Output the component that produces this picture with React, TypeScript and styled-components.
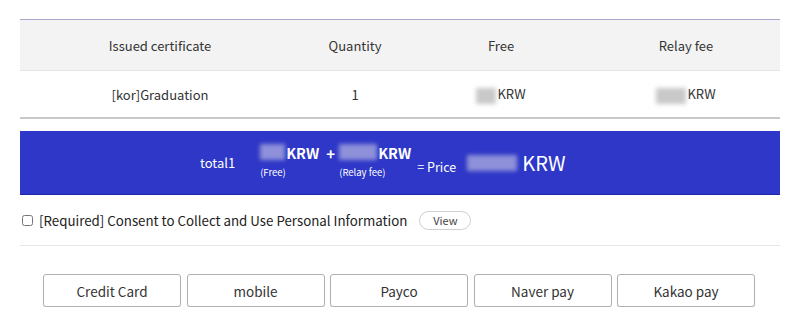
import React from 'react'
import styled, { createGlobalStyle } from 'styled-components'

const GlobalStyle = createGlobalStyle`
  html, body {
    margin: 0;
    padding: 0;
    background: #fff;
  }
  body {
    font-family: 'Noto Sans CJK KR', 'Noto Sans', sans-serif;
    color: #333;
  }
`

const Page = styled.div`
  width: 760px;
  padding: 19px 20px 0;
`

const Table = styled.table`
  width: 100%;
  border-collapse: collapse;
  border-top: 1px solid #a9a8cb;
  border-bottom: 2px solid #c9c9c9;
  font-size: 13px;
  color: #333;

  th {
    background: #f3f3f3;
    font-weight: 400;
    height: 50px;
    border-bottom: 1px solid #e6e6e6;
    padding: 0;
  }
  td {
    height: 46px;
    text-align: center;
    padding: 0;
  }
`

const Blur = styled.span<{ w: number; dark?: boolean }>`
  display: inline-block;
  width: ${p => p.w}px;
  height: 16px;
  vertical-align: middle;
  background: ${p => (p.dark ? '#8e90d9' : '#c9c9c9')};
  filter: blur(2px);
  margin-right: 1px;
`

const Summary = styled.div`
  margin-top: 12px;
  height: 63px;
  background: #2e37c7;
  border-bottom: 1px solid #1e26a8;
  display: flex;
  align-items: center;
  color: #fff;
  padding-left: 180px;
`

const TotalLabel = styled.span`
  font-size: 13px;
  margin-right: 25px;
`

const Amount = styled.div`
  display: flex;
  flex-direction: column;
  align-items: flex-start;
  margin-top: -4px;
`

const AmountValue = styled.span`
  font-size: 14.5px;
  font-weight: 700;
  display: flex;
  align-items: center;
  height: 20px;
`

const AmountNote = styled.span`
  font-size: 9.5px;
  margin-top: 3px;
`

const Plus = styled.span`
  font-size: 15px;
  font-weight: 700;
  margin: -18px 4px 0 7px;
`

const Equal = styled.span`
  font-size: 12.5px;
  margin: 8px 11px 0 6px;
`

const Price = styled.span`
  font-size: 20px;
  display: flex;
  align-items: center;
  gap: 4px;
`

const Consent = styled.div`
  display: flex;
  align-items: center;
  height: 50px;
  border-bottom: 1px solid #e6e6e6;
  font-size: 13.3px;
  color: #222;
  padding-left: 2px;
`

const Check = styled.input`
  width: 11px;
  height: 11px;
  margin: 0 6px 0 0;
`

const ViewButton = styled.button`
  margin-left: 12px;
  height: 19px;
  width: 52px;
  border: 1px solid #cfcfcf;
  border-radius: 10px;
  background: #fff;
  font-family: inherit;
  font-size: 11px;
  color: #444;
  padding: 0;
`

const PayRow = styled.div`
  display: flex;
  justify-content: center;
  gap: 5.5px;
  margin-top: 28px;
  padding-right: 2px;
`

const PayButton = styled.button`
  width: 138px;
  height: 33px;
  border: 1px solid #b0b0b0;
  border-radius: 3px;
  box-shadow: 0 1px 1px rgba(0, 0, 0, 0.12);
  background: #fff;
  font-family: inherit;
  font-size: 13.5px;
  color: #333;
  padding: 0;
`

export default function App() {
  return (
    <>
      <GlobalStyle />
      <Page>
        <Table>
          <colgroup>
            <col style={{ width: 280 }} />
            <col style={{ width: 110 }} />
            <col style={{ width: 182 }} />
            <col style={{ width: 188 }} />
          </colgroup>
          <thead>
            <tr>
              <th>Issued certificate</th>
              <th>Quantity</th>
              <th>Free</th>
              <th>Relay fee</th>
            </tr>
          </thead>
          <tbody>
            <tr>
              <td>[kor]Graduation</td>
              <td>1</td>
              <td>
                <Blur w={20} />KRW
              </td>
              <td>
                <Blur w={30} />KRW
              </td>
            </tr>
          </tbody>
        </Table>

        <Summary>
          <TotalLabel>total1</TotalLabel>
          <Amount>
            <AmountValue>
              <Blur w={25} dark />KRW
            </AmountValue>
            <AmountNote>(Free)</AmountNote>
          </Amount>
          <Plus>+</Plus>
          <Amount>
            <AmountValue>
              <Blur w={38} dark />KRW
            </AmountValue>
            <AmountNote>(Relay fee)</AmountNote>
          </Amount>
          <Equal>= Price</Equal>
          <Price>
            <Blur w={50} dark />KRW
          </Price>
        </Summary>

        <Consent>
          <Check type="checkbox" />
          [Required] Consent to Collect and Use Personal Information
          <ViewButton>View</ViewButton>
        </Consent>

        <PayRow>
          <PayButton>Credit Card</PayButton>
          <PayButton>mobile</PayButton>
          <PayButton>Payco</PayButton>
          <PayButton>Naver pay</PayButton>
          <PayButton>Kakao pay</PayButton>
        </PayRow>
      </Page>
    </>
  )
}
